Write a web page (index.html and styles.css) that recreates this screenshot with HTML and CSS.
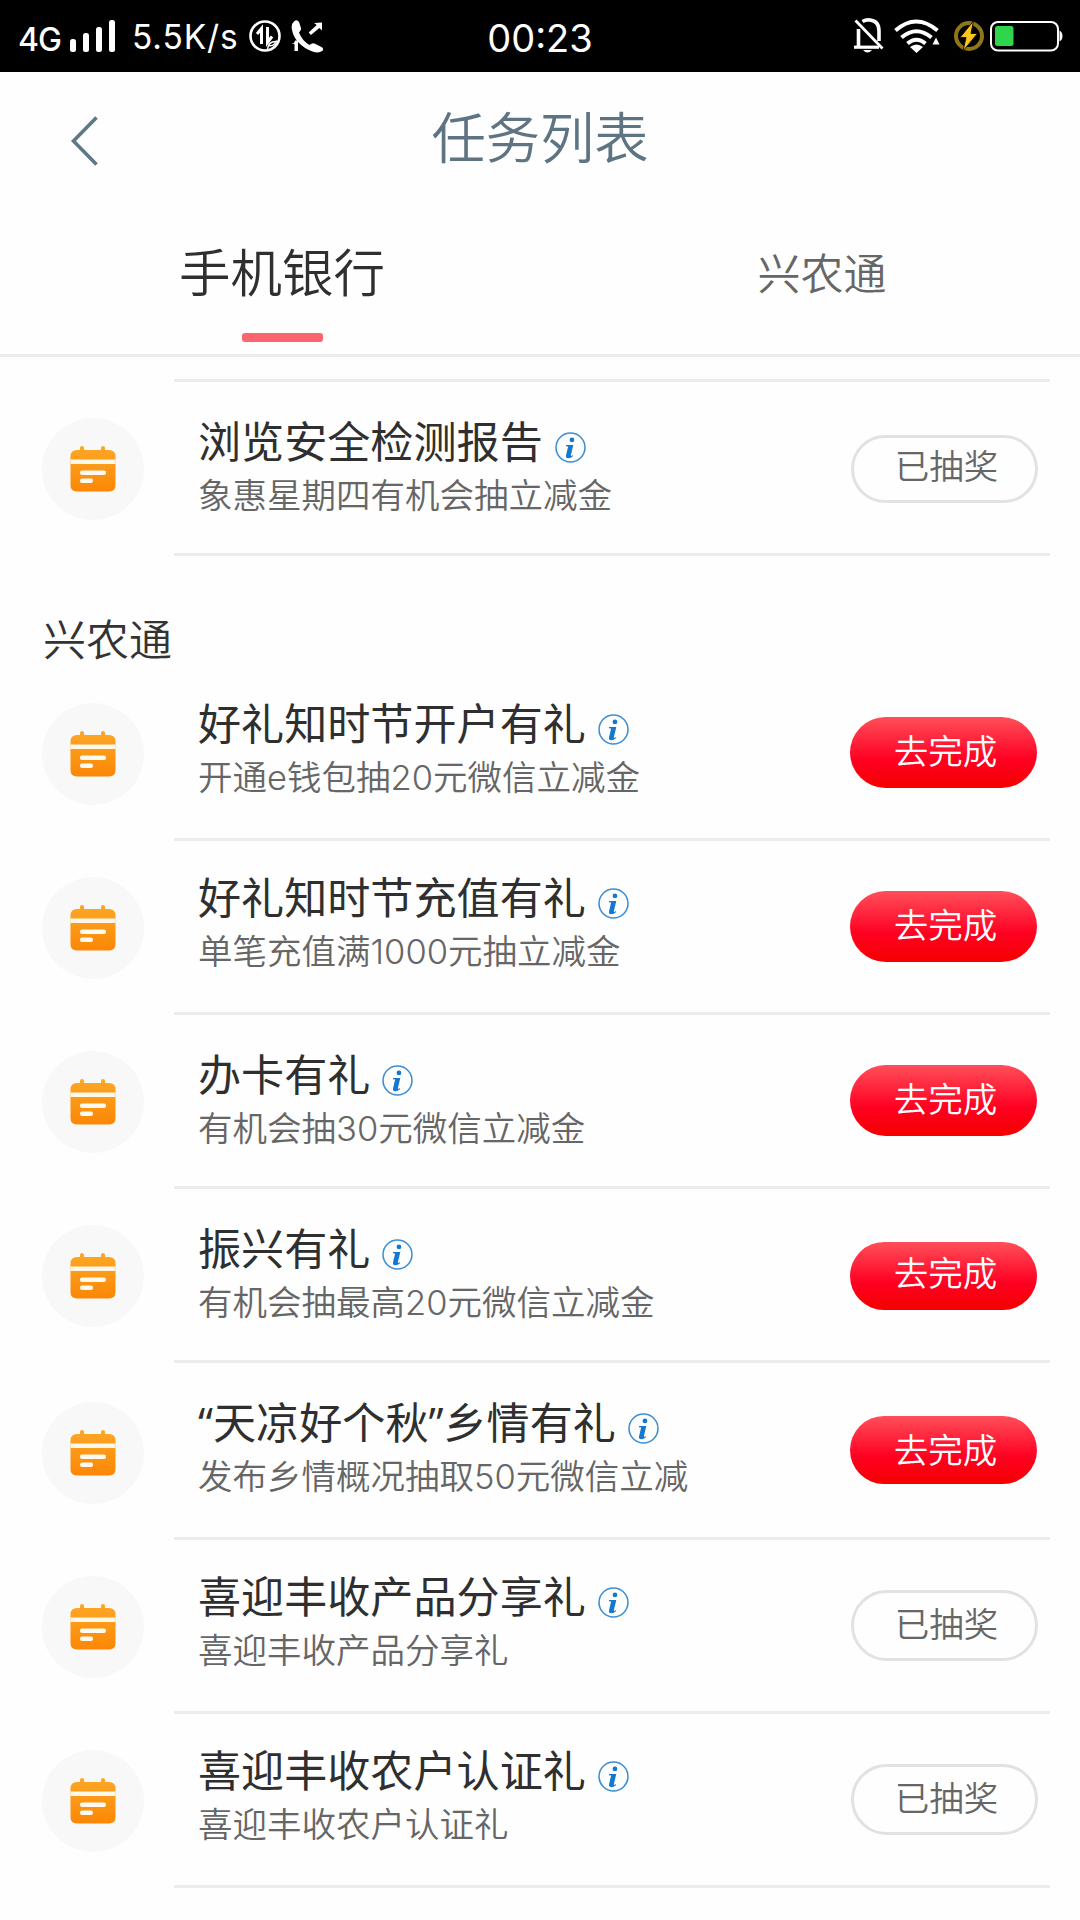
FILE: index.html
```html
<!DOCTYPE html>
<html lang="zh-CN">
<head>
<meta charset="utf-8">
<title>任务列表</title>
<link rel="stylesheet" href="styles.css">
</head>
<body>
<svg class="defs" width="0" height="0" aria-hidden="true">
  <defs>
    <linearGradient id="orange" x1="0" y1="0" x2="0" y2="1">
      <stop offset="0" stop-color="#fda727"/>
      <stop offset="1" stop-color="#fb8705"/>
    </linearGradient>
    <symbol id="calendar" viewBox="0 0 46 46">
      <path fill="url(#orange)" d="M7 4h3V2a2 2 0 0 1 4 0v2h17V2a2 2 0 0 1 4 0v2h4q6.500 0 6.500 6.500V39q0 6.500-6.500 6.500H7Q.5 45.500.5 39V10.500Q.5 4 7 4z"/>
      <path fill="#fff7e8" d="M.5 13.500h45v4.500H.5z"/>
      <rect x="10" y="24.500" width="26" height="4.600" rx="2" fill="#fffaf0"/>
      <rect x="10" y="32.500" width="13" height="4.600" rx="2" fill="#fffaf0"/>
    </symbol>
    <symbol id="info" viewBox="0 0 30 30">
      <circle cx="15" cy="15" r="14" fill="none" stroke="#3d8fd4" stroke-width="1.500"/>
      <circle cx="16.400" cy="7.700" r="2.300" fill="#1478cf"/>
      <path fill="#1478cf" d="M10.800 12.500h6.900l-2.300 9.700q-.3 1.300.8.900l1.300-.8-.2 1.100q-2.300 2-4.500 1.900-2.700-.2-2.100-2.900l2-8.300-2.200-.3z"/>
    </symbol>
  </defs>
</svg>

<div class="status">
  <div class="status-left">
    <span class="net">4G</span>
    <svg class="signal" width="46" height="32" viewBox="0 0 46 32" fill="#fff"><rect x="0" y="19" width="6" height="13" rx="2.500"/><rect x="13" y="13" width="6" height="19" rx="2.500"/><rect x="26" y="7" width="6" height="25" rx="2.500"/><rect x="39" y="0" width="6" height="32" rx="2.500"/></svg>
    <span class="speed">5.5K/s</span>
    <svg class="data" width="32" height="32" viewBox="0 0 32 32" fill="none" stroke="#fff"><circle cx="16" cy="16" r="14.500" stroke-width="2.600"/><path stroke-width="3" d="M12.500 24V8.500L8 14M18.500 7v15.500l4.500-6"/><path stroke-width="1.500" d="M18.500 29q1-8 9-7.500M20 25.500q5 1 8-5"/></svg>
    <svg class="call" width="34" height="33" viewBox="0 0 34 33" fill="#fff"><path d="M3 1.500Q6-1 8 2l2 6q.5 2-2 4.500 3 8 10.500 12.500 3-2.500 5.500-1.200l7 3.500q2 1.500.5 3.500-4 3-10 .8Q3.500 24.500.8 9 0 4 3 1.500z"/><path d="M31 2.500v8l-2.600-2.600-8.500 7-2.200-2.400 8-7.400-2.600-2.200zM3.500 31v-7H.8q3-1 3.400-3.600H7V31z"/></svg>
  </div>
  <div class="clock">00:23</div>
  <div class="status-right">
    <svg class="bell" width="31" height="36" viewBox="0 0 31 36" fill="none" stroke="#fff"><path stroke-width="3.600" d="M5.500 28V11M9.500 3.500Q13 1.500 17 2q9 1 9 11v10"/><path stroke-width="3.200" d="M1 29.200h25"/><path stroke-width="2.800" d="M2.500 2.500l27 28"/><path fill="#fff" stroke="none" d="M10 32h9q-4.500 5-9 0z"/></svg>
    <svg class="wifi" width="46" height="34" viewBox="0 0 46 34" fill="none" stroke="#fff" stroke-width="4"><path d="M1.500 11.500q20.500-18 42 0M7.500 18.500q15-12.500 30 0M13.500 24.500q9-7.500 18 0"/><path fill="#fff" stroke="none" d="M16 28q6.500-5 13 0l-6.500 6zM38.500 25.500l3.500-7 3.500 7z"/></svg>
    <svg class="bolt" width="32" height="32" viewBox="0 0 32 32"><circle cx="16" cy="16" r="13" fill="none" stroke="#8f7717" stroke-width="4"/><path fill="#fcc51c" stroke="#1a1500" stroke-width="1" d="M20.500 1L7 17.500h6L10 31l14.500-17.500h-6.500z"/></svg>
    <svg class="battery" width="73" height="31" viewBox="0 0 73 31"><rect x="1" y="1" width="67" height="28.500" rx="7" fill="none" stroke="#fff" stroke-width="2"/><rect x="5" y="5" width="18.500" height="20" rx="2.500" fill="#2fd54b"/><path fill="#fff" d="M69.500 9.500q3 1.500 3 5.500t-3 5.500z"/></svg>
  </div>
</div>

<header class="nav">
  <svg class="back" width="30" height="52" viewBox="0 0 30 52" fill="none" stroke="#5f7886" stroke-width="3.600"><path d="M26.500 2.500L3.500 26l23 23.500"/></svg>
  <h1 class="nav-title">任务列表</h1>
</header>

<nav class="tabs">
  <div class="tab tab-active">手机银行</div>
  <div class="tab">兴农通</div>
</nav>

<main>
  <div class="peek"></div>
  <div class="row row-low">
    <div class="badge"><svg><use href="#calendar"/></svg></div>
    <div class="body">
      <div class="text"><div class="name">浏览安全检测报告<svg class="info"><use href="#info"/></svg></div><div class="desc">象惠星期四有机会抽立减金</div></div>
      <div class="btn btn-done btn-short">已抽奖</div>
    </div>
  </div>

  <h2 class="section">兴农通</h2>

  <div class="row">
    <div class="badge"><svg><use href="#calendar"/></svg></div>
    <div class="body">
      <div class="text"><div class="name">好礼知时节开户有礼<svg class="info"><use href="#info"/></svg></div><div class="desc">开通e钱包抽20元微信立减金</div></div>
      <div class="btn btn-go">去完成</div>
    </div>
  </div>
  <div class="row">
    <div class="badge"><svg><use href="#calendar"/></svg></div>
    <div class="body">
      <div class="text"><div class="name">好礼知时节充值有礼<svg class="info"><use href="#info"/></svg></div><div class="desc">单笔充值满1000元抽立减金</div></div>
      <div class="btn btn-go">去完成</div>
    </div>
  </div>
  <div class="row row-low">
    <div class="badge"><svg><use href="#calendar"/></svg></div>
    <div class="body">
      <div class="text"><div class="name">办卡有礼<svg class="info"><use href="#info"/></svg></div><div class="desc">有机会抽30元微信立减金</div></div>
      <div class="btn btn-go">去完成</div>
    </div>
  </div>
  <div class="row row-low">
    <div class="badge"><svg><use href="#calendar"/></svg></div>
    <div class="body">
      <div class="text"><div class="name">振兴有礼<svg class="info"><use href="#info"/></svg></div><div class="desc">有机会抽最高20元微信立减金</div></div>
      <div class="btn btn-go btn-short">去完成</div>
    </div>
  </div>
  <div class="row row-low row-tall">
    <div class="badge"><svg><use href="#calendar"/></svg></div>
    <div class="body">
      <div class="text"><div class="name">“天凉好个秋”乡情有礼<svg class="info"><use href="#info"/></svg></div><div class="desc">发布乡情概况抽取50元微信立减</div></div>
      <div class="btn btn-go btn-short btn-label-low">去完成</div>
    </div>
  </div>
  <div class="row">
    <div class="badge"><svg><use href="#calendar"/></svg></div>
    <div class="body">
      <div class="text"><div class="name">喜迎丰收产品分享礼<svg class="info"><use href="#info"/></svg></div><div class="desc">喜迎丰收产品分享礼</div></div>
      <div class="btn btn-done">已抽奖</div>
    </div>
  </div>
  <div class="row">
    <div class="badge"><svg><use href="#calendar"/></svg></div>
    <div class="body">
      <div class="text"><div class="name">喜迎丰收农户认证礼<svg class="info"><use href="#info"/></svg></div><div class="desc">喜迎丰收农户认证礼</div></div>
      <div class="btn btn-done">已抽奖</div>
    </div>
  </div>
</main>
</body>
</html>
```
FILE: styles.css
```css
* { box-sizing: border-box; }
body {
  margin: 0;
  width: 1080px;
  height: 1920px;
  overflow: hidden;
  background: #fefefe;
  color: #2f2f2f;
  font-family: "Open Sans", "Noto Sans CJK SC", sans-serif;
  font-weight: 350;
}
svg { display: block; flex: none; }
.defs { position: absolute; }
h1, h2 { margin: 0; font-weight: 350; }

/* status bar */
.status {
  display: grid;
  grid-template-columns: 1fr auto 1fr;
  height: 72px;
  padding: 0 18px;
  background: #000;
  color: #fff;
  font-family: Inter, Roboto, sans-serif;
  font-weight: 400;
}
.status-left, .status-right { display: flex; align-items: flex-start; }
.status-right { justify-content: flex-end; }
.net { font-size: 32px; font-weight: 500; line-height: 40px; letter-spacing: -1px; margin-top: 20px; width: 52px; }
.signal { margin-top: 20px; }
.speed { font-size: 33.500px; line-height: 40px; letter-spacing: .9px; margin: 17px 0 0 16px; width: 106px; white-space: nowrap; }
.data { margin: 20px 0 0 11px; }
.call { margin: 20px 0 0 10px; }
.clock { font-size: 38px; line-height: 44px; margin-top: 16px; letter-spacing: 0; }
.bell { margin: 18px 10px 0 0; }
.wifi { margin: 19px 13px 0 0; }
.bolt { margin: 20px 5px 0 0; }
.battery { margin: 21px -1px 0 0; }

/* title bar */
.nav {
  display: grid;
  grid-template-columns: 140px 1fr 140px;
  height: 136px;
  padding-top: 30px;
}
.back { margin: 13px 0 0 70px; }
.nav-title { font-size: 54.300px; line-height: 70px; color: #5f7482; text-align: center; }

/* tabs */
.tabs {
  display: grid;
  grid-template-columns: 540px 540px;
  height: 149px;
  padding: 29px 0 0 12px;
  border-bottom: 3px solid #ececec;
}
.tab { font-size: 43px; line-height: 73px; color: #666; text-align: center; }
.tab-active { font-size: 51.500px; line-height: 71px; color: #2f2f2f; }
.tab-active::after {
  content: "";
  display: block;
  width: 81px;
  height: 9px;
  margin: 25px auto 0;
  border-radius: 3px;
  background: #fb666c;
}

/* task list */
.peek { height: 25px; margin: 0 30px 0 174px; border-bottom: 3px solid #ececec; }
.section { height: 111px; padding: 54px 0 0 43px; font-size: 43px; line-height: 60px; color: #333; }
.row { display: flex; height: 174px; }
.badge {
  flex: none;
  display: grid;
  place-items: center;
  width: 102px;
  height: 102px;
  margin: 36px 30px 0 42px;
  border-radius: 50%;
  background: #f8f8f8;
}
.badge svg { width: 46px; height: 46px; }
.body {
  flex: none;
  display: flex;
  justify-content: space-between;
  width: 876px;
  padding: 27px 12px 0 24px;
  border-bottom: 3px solid #ececec;
}
.name { display: flex; align-items: center; font-size: 43.100px; font-weight: 400; line-height: 60px; }
.info { width: 31px; height: 31px; margin: 11px 0 0 12px; }
.desc { font-family: Inter, "Noto Sans CJK SC", sans-serif; font-size: 34.500px; line-height: 48px; color: #666; }
.btn {
  width: 187px;
  height: 71px;
  margin-top: 23px;
  padding-left: 4px;
  border-radius: 36px;
  font-size: 34.500px;
  line-height: 67px;
  text-align: center;
}
.btn-go { margin-right: 1px; background: linear-gradient(#ff4f5a, #ff0022 60%, #f40000); color: #fff; }
.btn-done { border: 3px solid #e2e2e2; line-height: 61px; color: #666; }
.btn-short { height: 68px; line-height: 62px; }
.btn-done.btn-short { line-height: 56px; }
.btn-label-low { line-height: 68px; }

.row-low .body { padding-top: 30px; }
.row-low .btn { margin-top: 20px; }
.row-low .btn-short { margin-top: 23px; }
.row-tall { height: 177px; }
.row-tall .badge { margin-top: 39px; }
```
